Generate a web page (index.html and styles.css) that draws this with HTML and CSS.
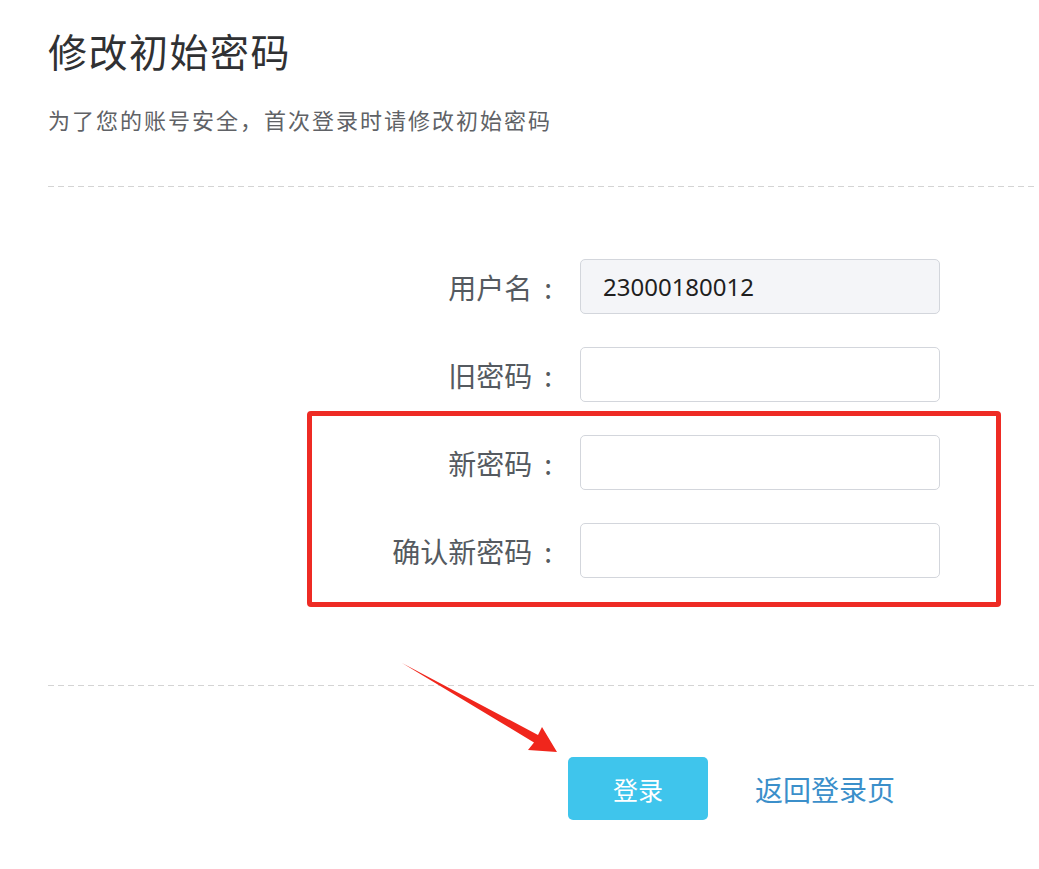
FILE: index.html
```html
<!DOCTYPE html>
<html lang="zh-CN">
<head>
<meta charset="utf-8">
<title>修改初始密码</title>
<link rel="stylesheet" href="styles.css">
</head>
<body>
<div class="page">
  <h1 class="title">修改初始密码</h1>
  <p class="subtitle">为了您的账号安全，首次登录时请修改初始密码</p>
  <div class="divider"></div>
  <form class="form">
    <div class="row">
      <label class="label">用户名<span class="colon">:</span></label>
      <div class="input input-disabled">23000180012</div>
    </div>
    <div class="row">
      <label class="label">旧密码<span class="colon">:</span></label>
      <div class="input"></div>
    </div>
    <div class="row">
      <label class="label">新密码<span class="colon">:</span></label>
      <div class="input"></div>
    </div>
    <div class="row">
      <label class="label">确认新密码<span class="colon">:</span></label>
      <div class="input"></div>
    </div>
  </form>
  <div class="divider divider-bottom"></div>
  <div class="actions">
    <button type="button" class="btn">登录</button>
    <a class="link" href="#">返回登录页</a>
  </div>
</div>
<div class="highlight"></div>
<svg class="arrow" width="1039" height="869" viewBox="0 0 1039 869">
  <polygon points="402,663 538,735 542,727 557,752 528,750 534,742.5" fill="#f0261c"/>
</svg>
</body>
</html>
```

FILE: styles.css
```css
html, body {
  margin: 0;
  padding: 0;
  background: #ffffff;
}
body {
  font-family: "Noto Sans CJK SC", "Noto Sans", sans-serif;
  position: relative;
  width: 1039px;
  height: 869px;
  overflow: hidden;
}
.page {
  padding: 0 4px 0 48px;
}
.title {
  margin: 25px 0 0 0;
  font-size: 39px;
  line-height: 50px;
  font-weight: 400;
  color: #303133;
  letter-spacing: 1.5px;
}
.subtitle {
  margin: 29px 0 0 0;
  font-size: 22px;
  line-height: 30px;
  color: #606266;
  letter-spacing: 2px;
}
.divider {
  margin-top: 52px;
  height: 1px;
  background: repeating-linear-gradient(to right, #d4d4d4 0 6px, transparent 6px 10px);
}
.form {
  margin: 72px 0 0 0;
  display: flex;
  flex-direction: column;
  gap: 33px;
}
.row {
  display: grid;
  grid-template-columns: 504px 360px;
  column-gap: 28px;
  align-items: center;
}
.label {
  text-align: right;
  font-size: 28px;
  line-height: 36px;
  color: #555a60;
}
.colon {
  margin-left: 12px;
}
.input {
  box-sizing: border-box;
  height: 55px;
  border: 1.5px solid #d3d6dc;
  border-radius: 5px;
  background: #ffffff;
  padding-left: 22px;
  display: flex;
  align-items: center;
  font-family: "Noto Sans", "Noto Sans CJK SC", sans-serif;
  font-size: 24px;
  color: #1f1f1f;
}
.input-disabled {
  background: #f4f5f8;
}
.divider-bottom {
  margin-top: 107px;
}
.actions {
  margin-top: 71px;
  padding-left: 520px;
  display: flex;
  align-items: center;
  gap: 47px;
}
.btn {
  width: 140px;
  height: 63px;
  border: none;
  border-radius: 5px;
  background: #3fc5ec;
  color: #ffffff;
  font-family: "Noto Sans CJK SC", sans-serif;
  font-size: 25px;
  padding: 0;
}
.link {
  font-size: 28px;
  color: #3b8fca;
  text-decoration: none;
}
.highlight {
  position: absolute;
  left: 307px;
  top: 411px;
  width: 694px;
  height: 196px;
  box-sizing: border-box;
  border: 5px solid #ee2b24;
  border-radius: 4px;
  pointer-events: none;
}
.arrow {
  position: absolute;
  left: 0;
  top: 0;
  pointer-events: none;
}
```
